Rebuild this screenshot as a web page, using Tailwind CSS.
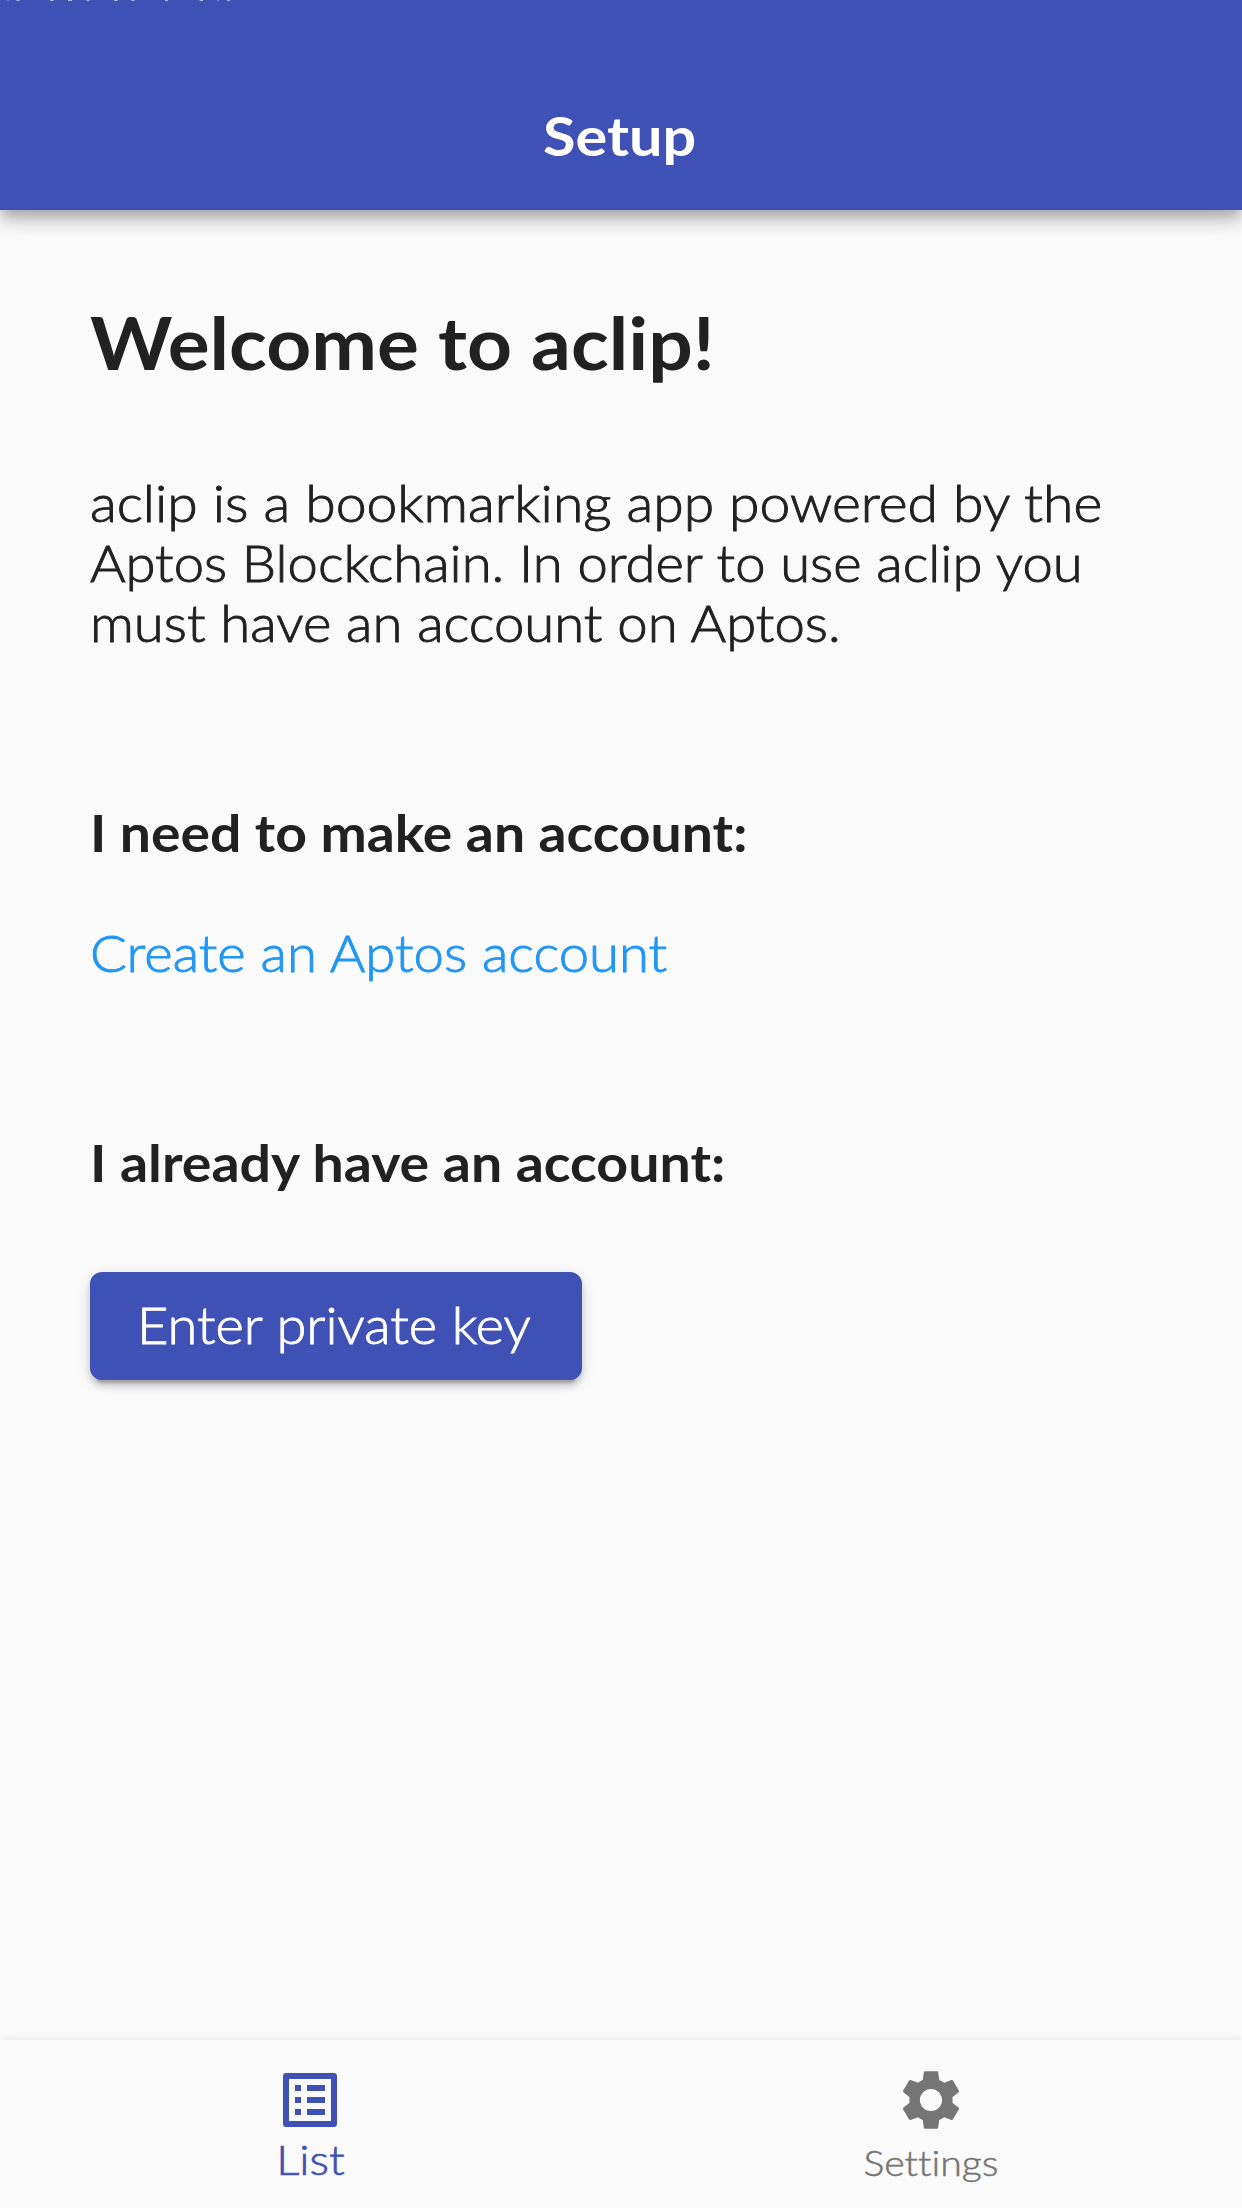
<!DOCTYPE html>
<html lang="en">
<head>
<meta charset="utf-8">
<title>Setup</title>
<script src="https://cdn.jsdelivr.net/npm/@tailwindcss/browser@4"></script>
</head>
<body class="bg-[#fafafa]">
<div class="flex h-[2208px] w-[1242px] flex-col overflow-hidden bg-[#fafafa] font-['Lato',sans-serif] text-[51px] leading-[60px] text-[#212121] [font-variant-ligatures:none]">
  <header class="relative z-10 flex h-[210px] shrink-0 flex-col items-start bg-[#3f51b5] shadow-[0_6px_12px_-3px_rgba(0,0,0,0.2),0_12px_15px_0_rgba(0,0,0,0.14),0_3px_30px_0_rgba(0,0,0,0.12)]">
    <!-- lower edge of the clipped status line -->
    <svg class="block h-px w-[240px]" viewBox="0 0 240 1" fill="#fff" fill-opacity=".6" aria-hidden="true">
      <path d="M16.5 0h3v1h-3zM50 0h3.500v1H50zM68 0h4v1h-4zM86.500 0h3v1h-3zM114 0h3.500v1H114zM131.500 0h3v1h-3zM165 0h3v1h-3zM199.500 0h3.500v1h-3.500zM227 0h3v1h-3z"/>
      <path fill-opacity=".3" d="M7 0h2v1H7zM217 0h2v1h-2z"/>
    </svg>
    <h1 class="mt-[105px] ml-[543px] origin-left scale-x-[1.1] text-[54px] font-bold text-white">Setup</h1>
  </header>
  <main class="flex flex-1 flex-col items-start whitespace-nowrap pt-[90px] pl-[90px]">
    <h2 class="origin-left scale-x-[1.09] text-[72px] leading-[84px] font-bold">Welcome to aclip!</h2>
    <p class="mt-[89px] flex flex-col items-start font-light [-webkit-text-stroke:0.9px]"><span class="origin-left scale-x-[1.083]">aclip is a bookmarking app powered by the</span><span class="origin-left scale-x-[1.066]">Aptos Blockchain. In order to use aclip you</span><span class="origin-left scale-x-[1.068]">must have an account on Aptos.</span></p>
    <h3 class="mt-[150px] origin-left scale-x-[1.084] font-bold">I need to make an account:</h3>
    <a class="mt-[60px] origin-left scale-x-[1.068] font-light [-webkit-text-stroke:0.9px] text-[#2196f3]">Create an Aptos account</a>
    <h3 class="mt-[150px] origin-left scale-x-[1.088] font-bold">I already have an account:</h3>
    <button class="mt-[79px] flex h-[108px] w-[492px] items-center rounded-xl bg-[#3f51b5] pb-[2px] pl-[47px] font-light text-white shadow-[0_9px_3px_-6px_rgba(0,0,0,0.2),0_6px_6px_0_rgba(0,0,0,0.14),0_3px_15px_0_rgba(0,0,0,0.12)]"><span class="origin-left scale-x-[1.063] [-webkit-text-stroke:0.9px]">Enter private key</span></button>
  </main>
  <nav class="grid h-[168px] shrink-0 grid-cols-2 bg-[#fafafa] pt-6 pr-px font-light shadow-[0_-1px_8px_rgba(0,0,0,0.08)]">
    <a class="flex flex-col items-center text-[42px] leading-[46px] text-[#3f51b5]">
      <svg class="size-[72px]" viewBox="0 0 24 24" fill="currentColor"><path fill-rule="evenodd" d="M3.900 3h16.200c.5 0 .9.4.9.9v16.200c0 .5-.4.9-.9.9H3.900c-.5 0-.9-.4-.9-.9V3.900c0-.5.4-.9.9-.9zM5 5v14h14V5zM7 7h2v2H7zM11 7h6v2h-6zM7 11h2v2H7zM11 11h6v2h-6zM7 15h2v2H7zM11 15h6v2h-6z"/></svg>
      <span class="scale-x-[1.09] [-webkit-text-stroke:0.7px]">List</span>
    </a>
    <a class="flex flex-col items-center text-[36px] leading-[52px] text-[#757575]">
      <svg class="size-[72px]" viewBox="0 0 24 24" fill="currentColor"><path d="M19.140 12.940c.04-.3.06-.61.06-.94 0-.32-.02-.64-.07-.94l2.030-1.580c.18-.14.23-.41.12-.61l-1.920-3.320c-.12-.22-.37-.29-.59-.22l-2.390.96c-.5-.38-1.030-.7-1.620-.94l-.36-2.540c-.04-.24-.24-.41-.48-.41h-3.840c-.24 0-.43.17-.47.41l-.36 2.540c-.59.24-1.130.57-1.620.94l-2.390-.96c-.22-.08-.47 0-.59.22L2.740 8.870c-.12.21-.08.47.12.61l2.030 1.580c-.05.3-.09.63-.09.94s.02.64.07.94l-2.030 1.580c-.18.14-.23.41-.12.61l1.920 3.320c.12.22.37.29.59.22l2.390-.96c.5.38 1.030.7 1.620.94l.36 2.540c.05.24.24.41.48.41h3.840c.24 0 .44-.17.47-.41l.36-2.540c.59-.24 1.130-.56 1.620-.94l2.390.96c.22.08.47 0 .59-.22l1.920-3.320c.12-.22.07-.47-.12-.61l-2.010-1.580zM12 15.700c-2.040 0-3.700-1.660-3.700-3.700s1.660-3.700 3.700-3.700 3.700 1.660 3.700 3.700-1.660 3.700-3.700 3.700z"/></svg>
      <span class="scale-x-[1.09] [-webkit-text-stroke:0.5px]">Settings</span>
    </a>
  </nav>
</div>
</body>
</html>
